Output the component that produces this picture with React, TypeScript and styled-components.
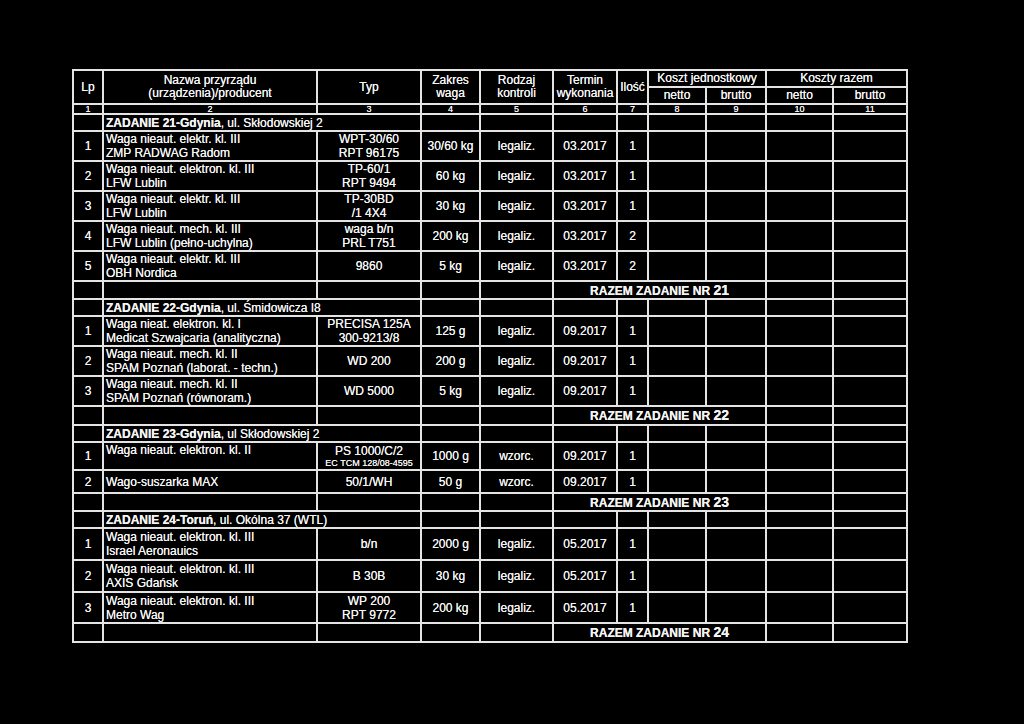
import styled, { createGlobalStyle } from 'styled-components';

type Item = {
	lp: string;
	name: string[];
	typ: string[];
	small?: string;
	zakres: string;
	rodzaj: string;
	termin: string;
	ilosc: string;
	h: number;
	top?: boolean;
};

type Section = {
	title: string;
	address: string;
	h: number;
	razem: string;
	razemH: number;
	items: Item[];
};

const sections: Section[] = [
	{
		title: 'ZADANIE 21-Gdynia',
		address: ', ul. Skłodowskiej 2',
		h: 17,
		razem: '21',
		razemH: 18,
		items: [
			{ lp: '1', name: ['Waga nieaut. elektr. kl. III', 'ZMP RADWAG Radom'], typ: ['WPT-30/60', 'RPT 96175'], zakres: '30/60 kg', rodzaj: 'legaliz.', termin: '03.2017', ilosc: '1', h: 30 },
			{ lp: '2', name: ['Waga nieaut. elektron. kl. III', 'LFW Lublin'], typ: ['TP-60/1', 'RPT 9494'], zakres: '60 kg', rodzaj: 'legaliz.', termin: '03.2017', ilosc: '1', h: 30 },
			{ lp: '3', name: ['Waga nieaut. elektr. kl. III', 'LFW Lublin'], typ: ['TP-30BD', '/1 4X4'], zakres: '30 kg', rodzaj: 'legaliz.', termin: '03.2017', ilosc: '1', h: 30 },
			{ lp: '4', name: ['Waga nieaut. mech. kl. III', 'LFW Lublin (pełno-uchylna)'], typ: ['waga b/n', 'PRL T751'], zakres: '200 kg', rodzaj: 'legaliz.', termin: '03.2017', ilosc: '2', h: 29 },
			{ lp: '5', name: ['Waga nieaut. elektr. kl. III', 'OBH Nordica'], typ: ['9860'], zakres: '5 kg', rodzaj: 'legaliz.', termin: '03.2017', ilosc: '2', h: 30 },
		],
	},
	{
		title: 'ZADANIE 22-Gdynia',
		address: ', ul. Śmidowicza I8',
		h: 17,
		razem: '22',
		razemH: 19,
		items: [
			{ lp: '1', name: ['Waga nieat. elektron. kl. I', 'Medicat Szwajcaria (analityczna)'], typ: ['PRECISA 125A', '300-9213/8'], zakres: '125 g', rodzaj: 'legaliz.', termin: '09.2017', ilosc: '1', h: 30 },
			{ lp: '2', name: ['Waga nieaut. mech. kl. II', 'SPAM Poznań (laborat. - techn.)'], typ: ['WD 200'], zakres: '200 g', rodzaj: 'legaliz.', termin: '09.2017', ilosc: '1', h: 29 },
			{ lp: '3', name: ['Waga nieaut. mech. kl. II', 'SPAM Poznań (równoram.)'], typ: ['WD 5000'], zakres: '5 kg', rodzaj: 'legaliz.', termin: '09.2017', ilosc: '1', h: 30 },
		],
	},
	{
		title: 'ZADANIE 23-Gdynia',
		address: ', ul  Skłodowskiej 2',
		h: 17,
		razem: '23',
		razemH: 18,
		items: [
			{ lp: '1', name: ['Waga nieaut. elektron. kl. II'], typ: ['PS 1000/C/2'], small: 'EC TCM 128/08-4595', zakres: '1000 g', rodzaj: 'wzorc.', termin: '09.2017', ilosc: '1', h: 28, top: true },
			{ lp: '2', name: ['Wago-suszarka MAX'], typ: ['50/1/WH'], zakres: '50 g', rodzaj: 'wzorc.', termin: '09.2017', ilosc: '1', h: 23 },
		],
	},
	{
		title: 'ZADANIE 24-Toruń',
		address: ', ul. Okólna 37 (WTL)',
		h: 17,
		razem: '24',
		razemH: 19,
		items: [
			{ lp: '1', name: ['Waga nieaut. elektron. kl. III', 'Israel Aeronauics'], typ: ['b/n'], zakres: '2000 g', rodzaj: 'legaliz.', termin: '05.2017', ilosc: '1', h: 32 },
			{ lp: '2', name: ['Waga nieaut. elektron. kl. III', 'AXIS Gdańsk'], typ: ['B 30B'], zakres: '30 kg', rodzaj: 'legaliz.', termin: '05.2017', ilosc: '1', h: 32 },
			{ lp: '3', name: ['Waga nieaut. elektron. kl. III', 'Metro Wag'], typ: ['WP 200', 'RPT 9772'], zakres: '200 kg', rodzaj: 'legaliz.', termin: '05.2017', ilosc: '1', h: 31 },
		],
	},
];

const colWidths = [30, 214, 104, 59, 73, 64, 31, 58, 60, 67, 74];

function Lines({ lines }: { lines: string[] }) {
	return (
		<>
			{lines.map((l, i) => (
				<Line key={i}>{l}</Line>
			))}
		</>
	);
}

export default function App() {
	return (
		<Page>
			<GlobalStyle />
			<Sheet>
				<colgroup>
					{colWidths.map((w, i) => (
						<col key={i} style={{ width: w }} />
					))}
				</colgroup>
				<thead>
					<Row $h={17}>
						<Head rowSpan={2}>Lp</Head>
						<Head rowSpan={2}>
							<Line>Nazwa przyrządu</Line>
							<Line>(urządzenia)/producent</Line>
						</Head>
						<Head rowSpan={2}>Typ</Head>
						<Head rowSpan={2}>
							<Line>Zakres</Line>
							<Line>waga</Line>
						</Head>
						<Head rowSpan={2}>
							<Line>Rodzaj</Line>
							<Line>kontroli</Line>
						</Head>
						<Head rowSpan={2}>
							<Line>Termin</Line>
							<Line>wykonania</Line>
						</Head>
						<Head rowSpan={2}>Ilość</Head>
						<Head colSpan={2}>Koszt jednostkowy</Head>
						<Head colSpan={2}>Koszty razem</Head>
					</Row>
					<Row $h={17}>
						<Head>netto</Head>
						<Head>brutto</Head>
						<Head>netto</Head>
						<Head>brutto</Head>
					</Row>
					<Row $h={9}>
						{colWidths.map((_, i) => (
							<NumCell key={i}>{i + 1}</NumCell>
						))}
					</Row>
				</thead>
				<tbody>
					{sections.map((s) => (
						<SectionRows key={s.title} section={s} />
					))}
				</tbody>
			</Sheet>
		</Page>
	);
}

function SectionRows({ section }: { section: Section }) {
	return (
		<>
			<Row $h={section.h}>
				<Cell />
				<Cell colSpan={2} $align='left'>
					<b>{section.title}</b>
					{section.address}
				</Cell>
				{Array.from({ length: 8 }).map((_, i) => (
					<Cell key={i} />
				))}
			</Row>
			{section.items.map((it) => (
				<Row key={it.lp} $h={it.h}>
					<Cell>{it.lp}</Cell>
					<Cell $align='left' $top={it.top}>
						<Lines lines={it.name} />
					</Cell>
					<Cell>
						<Lines lines={it.typ} />
						{it.small && <Small>{it.small}</Small>}
					</Cell>
					<Cell>{it.zakres}</Cell>
					<Cell>{it.rodzaj}</Cell>
					<Cell>{it.termin}</Cell>
					<Cell>{it.ilosc}</Cell>
					<Cell />
					<Cell />
					<Cell />
					<Cell />
				</Row>
			))}
			<Row $h={section.razemH}>
				<Cell />
				<Cell />
				<Cell />
				<Cell />
				<Cell />
				<Cell colSpan={4}>
					<Razem>
						RAZEM ZADANIE NR <RazemNr>{section.razem}</RazemNr>
					</Razem>
				</Cell>
				<Cell />
				<Cell />
			</Row>
		</>
	);
}

const GlobalStyle = createGlobalStyle`
	html, body {
		margin: 0;
		padding: 0;
		background: #000;
	}
	body {
		font-family: 'Liberation Sans', Arial, sans-serif;
		color: #f4f4f4;
	}
`;

const Page = styled.div`
	display: flex;
	align-items: flex-start;
	width: 1024px;
	height: 724px;
	padding: 69px 0 0 72px;
	box-sizing: border-box;
	background: #000;
`;

const Sheet = styled.table`
	table-layout: fixed;
	border-collapse: collapse;
	width: 836px;
	border: 2px solid #e4e4e4;
	text-shadow: 0 0 0.6px #fff;
`;

const Row = styled.tr<{ $h: number }>`
	height: ${(p) => p.$h}px;
`;

const Head = styled.th`
	border: 2px solid #e4e4e4;
	padding: 0;
	font-weight: normal;
	font-size: 12px;
	line-height: 13px;
	text-align: center;
	vertical-align: middle;
	color: #f4f4f4;
`;

const NumCell = styled.td`
	border: 2px solid #e4e4e4;
	padding: 0;
	font-size: 9px;
	line-height: 8px;
	text-align: center;
	vertical-align: middle;
`;

const Cell = styled.td<{ $align?: 'left' | 'center'; $top?: boolean }>`
	border: 2px solid #e4e4e4;
	padding: 0 0 0 ${(p) => (p.$align === 'left' ? '2px' : '0')};
	font-size: 12px;
	line-height: 14px;
	text-align: ${(p) => p.$align || 'center'};
	vertical-align: ${(p) => (p.$top ? 'top' : 'middle')};
	white-space: nowrap;
	overflow: hidden;
	b {
		font-weight: bold;
	}
`;

const Line = styled.div`
	display: block;
`;

const Small = styled.div`
	font-size: 9px;
	line-height: 11px;
`;

const Razem = styled.span`
	font-size: 12px;
	font-weight: bold;
`;

const RazemNr = styled.span`
	font-size: 14px;
`;
